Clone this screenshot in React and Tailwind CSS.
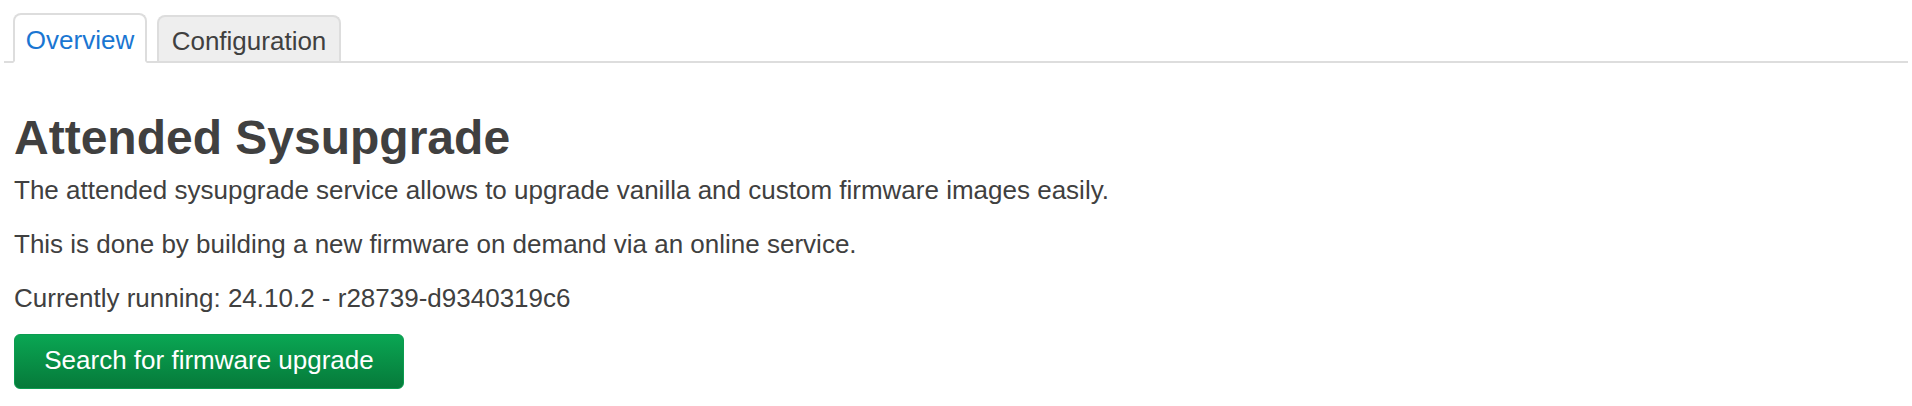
export default function App() {
  return (
    <div
      className="w-full h-[406px] bg-white text-[#404040] overflow-hidden"
      style={{ fontFamily: '"Liberation Sans", Arial, Helvetica, sans-serif' }}
    >
      <div className="mx-[4px] flex items-end pt-[13px] pl-[9px] gap-[10px] border-b-2 border-[#dddddd]">
        <div className="w-[134px] -mb-[2px] flex justify-center border-2 border-[#dddddd] border-b-white bg-white rounded-t-[8px] pt-[12px] pb-[8px] text-[26px] leading-[26px] text-[#1a76d2]">
          Overview
        </div>
        <div className="w-[184px] flex justify-center border-2 border-b-0 border-[#dddddd] bg-[#eeeeee] rounded-t-[8px] pt-[11px] pb-[7px] text-[26px] leading-[26px] text-[#404040]">
          Configuration
        </div>
      </div>
      <div className="pl-[14px]">
        <h2 className="mt-[51px] text-[48px] leading-[48px] font-bold text-[#404040]">
          Attended Sysupgrade
        </h2>
        <p className="mt-[10px] mb-[18px] text-[26px] leading-[36px]">
          The attended sysupgrade service allows to upgrade vanilla and custom firmware images easily.
        </p>
        <p className="mb-[18px] text-[26px] leading-[36px]">
          This is done by building a new firmware on demand via an online service.
        </p>
        <p className="mb-[18px] text-[26px] leading-[36px]">
          Currently running: 24.10.2 - r28739-d9340319c6
        </p>
        <button className="mt-[2px] w-[390px] flex justify-center border border-[#0b9c50] rounded-[6px] bg-linear-to-b from-[#0aa653] to-[#067a3a] pt-[12px] pb-[15px] text-[26px] leading-[26px] text-white">
          Search for firmware upgrade
        </button>
      </div>
    </div>
  );
}
